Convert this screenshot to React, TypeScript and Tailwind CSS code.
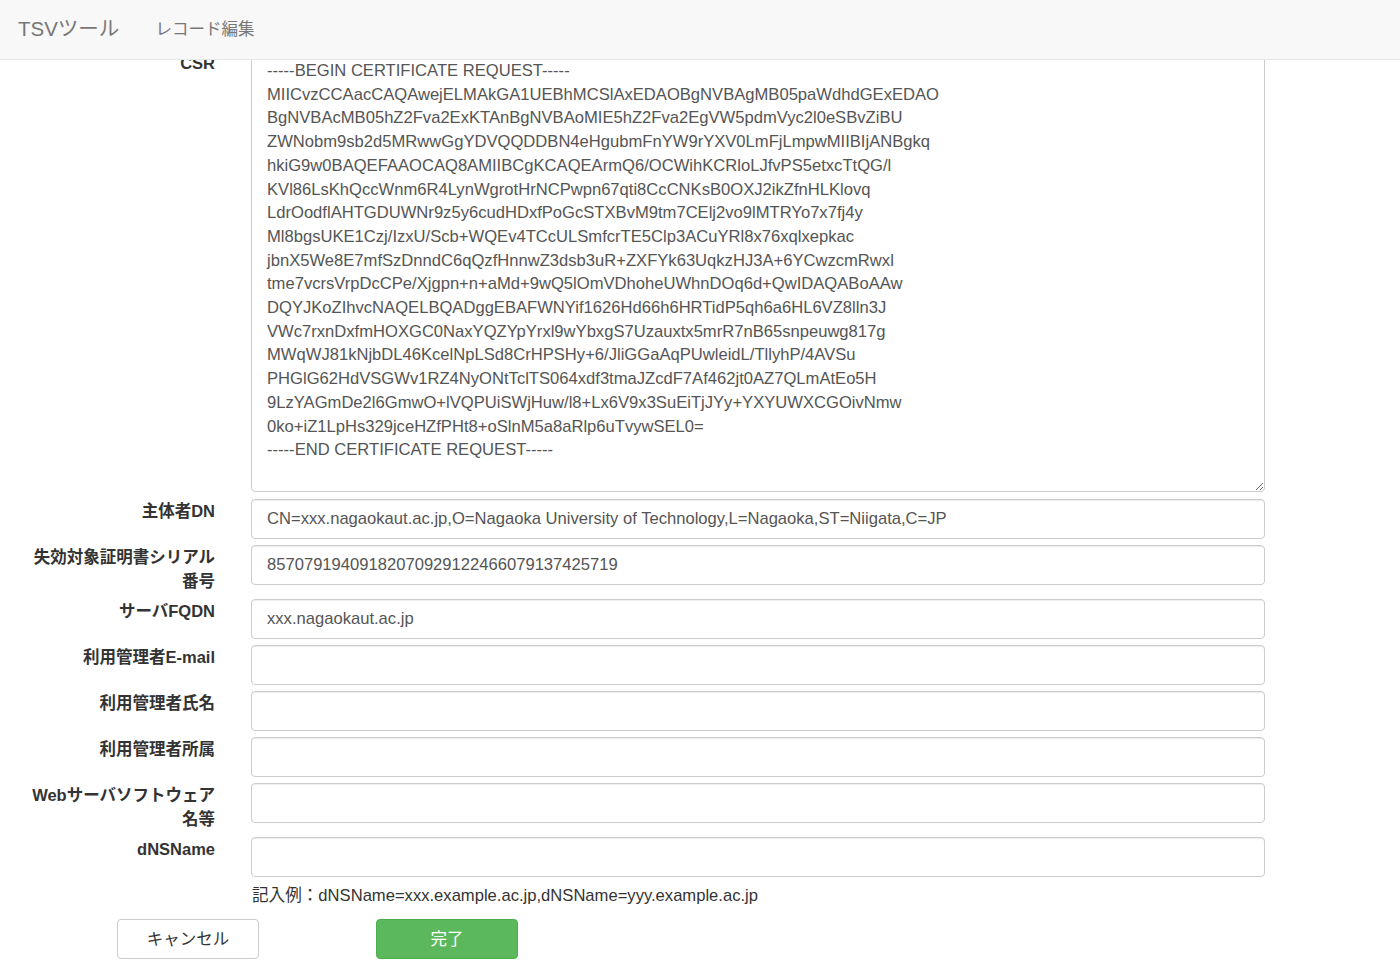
import React from 'react';

const csr = `-----BEGIN CERTIFICATE REQUEST-----
MIICvzCCAacCAQAwejELMAkGA1UEBhMCSlAxEDAOBgNVBAgMB05paWdhdGExEDAO
BgNVBAcMB05hZ2Fva2ExKTAnBgNVBAoMIE5hZ2Fva2EgVW5pdmVyc2l0eSBvZiBU
ZWNobm9sb2d5MRwwGgYDVQQDDBN4eHgubmFnYW9rYXV0LmFjLmpwMIIBIjANBgkq
hkiG9w0BAQEFAAOCAQ8AMIIBCgKCAQEArmQ6/OCWihKCRloLJfvPS5etxcTtQG/l
KVl86LsKhQccWnm6R4LynWgrotHrNCPwpn67qti8CcCNKsB0OXJ2ikZfnHLKlovq
LdrOodflAHTGDUWNr9z5y6cudHDxfPoGcSTXBvM9tm7CElj2vo9lMTRYo7x7fj4y
Ml8bgsUKE1Czj/IzxU/Scb+WQEv4TCcULSmfcrTE5Clp3ACuYRl8x76xqlxepkac
jbnX5We8E7mfSzDnndC6qQzfHnnwZ3dsb3uR+ZXFYk63UqkzHJ3A+6YCwzcmRwxl
tme7vcrsVrpDcCPe/Xjgpn+n+aMd+9wQ5lOmVDhoheUWhnDOq6d+QwIDAQABoAAw
DQYJKoZIhvcNAQELBQADggEBAFWNYif1626Hd66h6HRTidP5qh6a6HL6VZ8lln3J
VWc7rxnDxfmHOXGC0NaxYQZYpYrxl9wYbxgS7Uzauxtx5mrR7nB65snpeuwg817g
MWqWJ81kNjbDL46KcelNpLSd8CrHPSHy+6/JliGGaAqPUwleidL/TllyhP/4AVSu
PHGlG62HdVSGWv1RZ4NyONtTclTS064xdf3tmaJZcdF7Af462jt0AZ7QLmAtEo5H
9LzYAGmDe2l6GmwO+lVQPUiSWjHuw/l8+Lx6V9x3SuEiTjJYy+YXYUWXCGOivNmw
0ko+iZ1LpHs329jceHZfPHt8+oSlnM5a8aRlp6uTvywSEL0=
-----END CERTIFICATE REQUEST-----`;

const font = 'font-["Liberation_Sans","Noto_Sans_CJK_JP",sans-serif]';

type Row = { label: React.ReactNode; value?: string };

const rows: Row[] = [
  { label: '主体者DN', value: 'CN=xxx.nagaokaut.ac.jp,O=Nagaoka University of Technology,L=Nagaoka,ST=Niigata,C=JP' },
  { label: <>失効対象証明書シリアル<br />番号</>, value: '85707919409182070929122466079137425719' },
  { label: 'サーバFQDN', value: 'xxx.nagaokaut.ac.jp' },
  { label: '利用管理者E-mail' },
  { label: '利用管理者氏名' },
  { label: '利用管理者所属' },
  { label: <>Webサーバソフトウェア<br />名等</> },
  { label: 'dNSName' },
];

const FieldRow: React.FC<Row> = ({ label, value }) => (
  <div className="flex items-start mb-[6px]">
    <div className="w-[215px] shrink-0 text-right text-[16.5px] leading-[24px] font-bold text-[#333]">{label}</div>
    <input
      readOnly
      defaultValue={value ?? ''}
      className="ml-[36px] w-[1014px] h-[40px] px-[15px] border border-[#ccc] rounded-[4px] bg-white text-[16.6px] text-[#555] shadow-[inset_0_1px_1px_rgba(0,0,0,0.075)] outline-none"
    />
  </div>
);

export default function App() {
  return (
    <div className={`min-h-[972px] bg-white ${font}`}>
      <nav className="sticky top-0 z-10 h-[60px] bg-[#f8f8f8] border-b border-[#e7e7e7] flex items-center">
        <span className="ml-[18px] text-[20.5px] text-[#777]">TSVツール</span>
        <span className="ml-[36px] text-[16.5px] text-[#777]">レコード編集</span>
      </nav>

      <form className="-mt-[9px]">
        <div className="flex items-start mb-[7px]">
          <div className="w-[215px] shrink-0 text-right text-[16.5px] leading-[24px] font-bold text-[#333]">CSR</div>
          <textarea
            readOnly
            defaultValue={csr}
            className={`ml-[36px] w-[1014px] h-[441px] px-[15px] pt-[7px] border border-[#ccc] rounded-[4px] bg-white text-[16.6px] leading-[23.7px] text-[#555] outline-none whitespace-pre overflow-hidden ${font}`}
          />
        </div>

        {rows.map((r, i) => (
          <FieldRow key={i} label={r.label} value={r.value} />
        ))}

        <div className="ml-[252px] mt-[7px] text-[16.6px] leading-[24px] text-[#333]">
          記入例：dNSName=xxx.example.ac.jp,dNSName=yyy.example.ac.jp
        </div>

        <div className="flex mt-[11px] ml-[117px] gap-[117px]">
          <button type="button" className="w-[142px] h-[40px] border border-[#ccc] rounded-[4px] bg-white text-[16.5px] text-[#333]">
            キャンセル
          </button>
          <button type="button" className="w-[142px] h-[40px] border border-[#4cae4c] rounded-[4px] bg-[#5cb85c] text-[16.5px] text-white">
            完了
          </button>
        </div>
      </form>
    </div>
  );
}
